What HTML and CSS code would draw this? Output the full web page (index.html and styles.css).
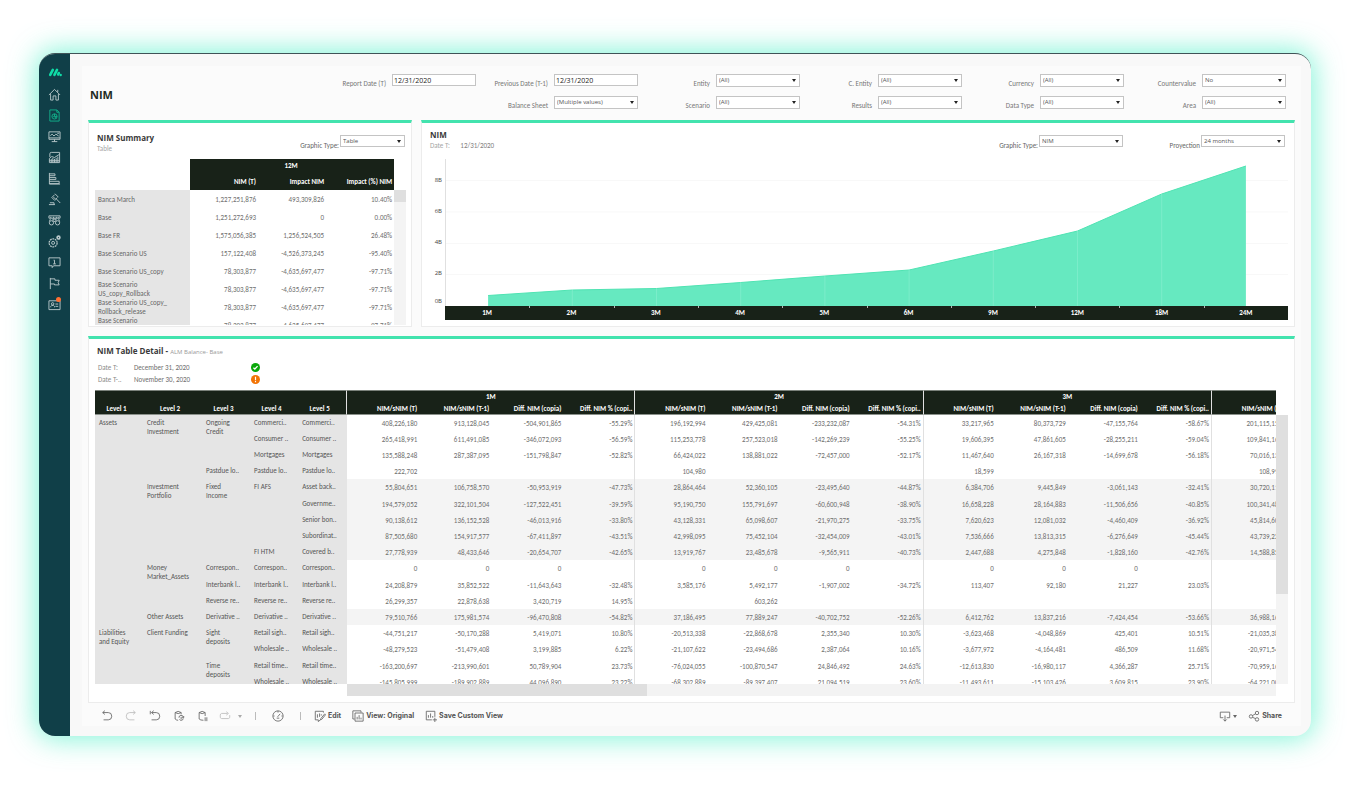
FILE: index.html
```html
<!DOCTYPE html>
<html lang="en">
<head>
<meta charset="utf-8">
<title>NIM</title>
<link rel="stylesheet" href="styles.css">
</head>
<body>
<div class="window">
  <aside class="sidebar">
    <svg class="logo" viewBox="0 0 14 10" width="14" height="10"><path d="M2.200 7.800 4.800 2.800M6.400 7.800 9 2.800M10.200 7.500 10.800 6" stroke="#0fdca6" stroke-width="2.600" stroke-linecap="round" fill="none"/><circle cx="12.700" cy="8" r="1.200" fill="#0fdca6"/></svg>
    <nav class="nav">
      <a href="#" aria-label="Home"><svg viewBox="0 0 14 14"><path d="M1 7.500 7 1.500 13 7.500M2.800 6.500V13H5.500V8.500H8.500V13H11.200V6.500M10.500 4.500V2"/></svg></a>
      <a href="#" class="active" aria-label="Reports"><svg viewBox="0 0 14 14"><path d="M2 1H9.500L12 3.500V13H2ZM9.500 1V3.500H12"/><circle cx="7" cy="8" r="2.800"/><path d="M7 5.200V8L9 9.800M7 8H9.800M5 7.500 6.500 9"/></svg></a>
      <a href="#" aria-label="Monitor"><svg viewBox="0 0 14 14"><path d="M1 2H13V10H1ZM1 8.500H13M7 10V12.500M4 12.500H10M2.500 6 4.500 4.500 6.500 6.500 8.500 4.500 11.500 6.500M10 3.500H12"/></svg></a>
      <a href="#" aria-label="Charts"><svg viewBox="0 0 14 14"><path d="M2 6.500V3Q2 1.500 3.500 1.500H12.500V12.500H1.500V8L4 6 7 7 12.500 3.500M3.500 12.500V8.500M5.200 12.500V7.500M7 12.500V8.500M8.800 12.500V7.500M10.600 12.500V6M1.500 10.500H12.500"/></svg></a>
      <a href="#" aria-label="Ranking"><svg viewBox="0 0 14 14"><path d="M1.500 1V13M1.500 2H7.500V4H1.500M1.500 6H8.500V8H1.500M1.500 10H12V12.500H1.500M1.500 13H13"/></svg></a>
      <a href="#" aria-label="Rules"><svg viewBox="0 0 14 14"><path d="M7.500 .8 11.200 4.500M3.800 4.500 7.500 8.200M7.200 1.800 4.800 4.200M10.200 4.800 7.800 7.200M5.500 4 8 6.500M8.800 6.200 13.200 10.800M1 12.500H7.500M2 10.500H6.500V12.500"/></svg></a>
      <a href="#" aria-label="Explore"><svg viewBox="0 0 14 14"><path d="M1 2H13V4.500H1ZM3 4.500V3M6 4.500V3M9 4.500V3M11 4.500V3M2.500 5.500 1.500 8M11.500 5.500 12.500 8M6 8H8M5 5.500H9M5.500 5.500V8M8.500 5.500V8"/><circle cx="3.700" cy="9.500" r="2.300"/><circle cx="10.300" cy="9.500" r="2.300"/></svg></a>
      <a href="#" aria-label="Settings"><svg viewBox="0 0 14 14"><circle cx="5.500" cy="8.500" r="4.300" stroke-dasharray="2 .7" stroke-width="1.300"/><circle cx="5.500" cy="8.500" r="1.600"/><circle cx="11.300" cy="2.800" r="1.500" stroke-width="1.800"/></svg></a>
      <a href="#" aria-label="Messages"><svg viewBox="0 0 14 14"><path d="M1 2H13V10.500H6L4.500 12.500V10.500H1ZM6 4.500H7V8.500M5.500 8.500H8.500"/></svg></a>
      <a href="#" aria-label="Flags"><svg viewBox="0 0 14 14"><path d="M2.500 1V13M2.500 2H7.500V3.500H12L11 6 12 8.500H7V7.500H2.500"/></svg></a>
      <a href="#" aria-label="Profile"><svg viewBox="0 0 14 14"><path d="M1 3H13V12.500H1ZM8 6.500H11M8 9H11M3 10V9L4 8H6L7 9V10"/><circle cx="5" cy="6.300" r="1.300"/></svg><span class="badge"></span></a>
    </nav>
  </aside>
  <main class="main">
    <div class="panel">
      <header class="top">
        <h1>NIM</h1>
        <form class="filters">
          <div class="field"><label for="f1">Report Date (T)</label><input id="f1" type="text" value="12/31/2020"></div>
          <div class="field"><label for="f2">Previous Date (T-1)</label><input id="f2" type="text" value="12/31/2020"></div>
          <div class="field"><label for="f3">Entity</label><span class="drop"><select id="f3"><option>(All)</option></select></span></div>
          <div class="field"><label for="f4">C. Entity</label><span class="drop"><select id="f4"><option>(All)</option></select></span></div>
          <div class="field"><label for="f5">Currency</label><span class="drop"><select id="f5"><option>(All)</option></select></span></div>
          <div class="field"><label for="f6">Countervalue</label><span class="drop"><select id="f6"><option>No</option></select></span></div>
          <div class="field second"><label for="f7">Balance Sheet</label><span class="drop"><select id="f7"><option>(Multiple values)</option></select></span></div>
          <div class="field"><label for="f8">Scenario</label><span class="drop"><select id="f8"><option>(All)</option></select></span></div>
          <div class="field"><label for="f9">Results</label><span class="drop"><select id="f9"><option>(All)</option></select></span></div>
          <div class="field"><label for="f10">Data Type</label><span class="drop"><select id="f10"><option>(All)</option></select></span></div>
          <div class="field"><label for="f11">Area</label><span class="drop"><select id="f11"><option>(All)</option></select></span></div>
        </form>
      </header>

      <div class="row">
        <section class="card summary">
          <div class="card-head">
            <div><h2>NIM Summary</h2><p class="sub">Table</p></div>
            <div class="pick"><label for="g1">Graphic Type:</label><span class="drop"><select id="g1"><option>Table</option></select></span></div>
          </div>
          <div class="summary-body">
            <table class="sum-table">
              <thead>
                <tr><td class="blank" rowspan="2"></td><th colspan="3" class="period">12M</th></tr>
                <tr><th>NIM (T)</th><th>Impact NIM</th><th>Impact (%) NIM</th></tr>
              </thead>
              <tbody>
                <tr><th>Banca March</th><td>1,227,251,876</td><td>493,309,826</td><td>10.40%</td></tr>
                <tr><th>Base</th><td>1,251,272,693</td><td>0</td><td>0.00%</td></tr>
                <tr><th>Base FR</th><td>1,575,056,385</td><td>1,256,524,505</td><td>26.48%</td></tr>
                <tr><th>Base Scenario US</th><td>157,122,408</td><td>-4,526,373,245</td><td>-95.40%</td></tr>
                <tr><th>Base Scenario US_copy</th><td>78,303,877</td><td>-4,635,697,477</td><td>-97.71%</td></tr>
                <tr><th>Base Scenario<br>US_copy_Rollback</th><td>78,303,877</td><td>-4,635,697,477</td><td>-97.71%</td></tr>
                <tr><th>Base Scenario US_copy_<br>Rollback_release</th><td>78,303,877</td><td>-4,635,697,477</td><td>-97.71%</td></tr>
                <tr><th class="upper">Base Scenario</th><td>78,303,877</td><td>-4,635,697,477</td><td>-97.71%</td></tr>
              </tbody>
            </table>
            <div class="vbar"><i></i></div>
          </div>
        </section>

        <section class="card chart-card">
          <div class="card-head">
            <div><h2>NIM</h2><p class="sub">Date T: <span class="date">12/31/2020</span></p></div>
            <div class="pick"><label for="g2">Graphic Type:</label><span class="drop"><select id="g2"><option>NIM</option></select></span></div>
            <div class="pick"><label for="g3">Proyection</label><span class="drop"><select id="g3"><option>24 months</option></select></span></div>
          </div>
          <div class="chart">
            <div class="y-axis"><span>8B</span><span>6B</span><span>4B</span><span>2B</span><span>0B</span></div>
            <div class="plot">
              <svg viewBox="0 0 1000 147" preserveAspectRatio="none">
                <path d="M0 21.500H1000M0 53H1000M0 84.500H1000M0 115.500H1000" stroke="#f7f7f7" fill="none"/>
                <path d="M50 147V136.500L150 131 250 129.500 350 123.500 450 117 550 111 650 92 750 72 850 35 950 7V147Z" fill="#66e9c0"/>
                <path d="M50 136.500 150 131 250 129.500 350 123.500 450 117 550 111 650 92 750 72 850 35 950 7" fill="none" stroke="#4fe3b2" vector-effect="non-scaling-stroke"/>
                <path d="M150 131V147M250 129.500V147M350 123.500V147M450 117V147M550 111V147M650 92V147M750 72V147M850 35V147" stroke="#7deccb" fill="none"/>
              </svg>
              <div class="x-axis"><span>1M</span><span>2M</span><span>3M</span><span>4M</span><span>5M</span><span>6M</span><span>9M</span><span>12M</span><span>18M</span><span>24M</span></div>
            </div>
          </div>
        </section>
      </div>

      <section class="card detail">
        <h2>NIM Table Detail - <small>ALM Balance- Base</small></h2>
        <dl class="dates">
          <dt>Date T:</dt><dd>December 31, 2020</dd><dd><svg viewBox="0 0 10 10" width="9" height="9"><circle cx="5" cy="5" r="5" fill="#0aa80a"/><path d="M2.700 5.200 4.300 6.700 7.300 3.500" fill="none" stroke="#fff" stroke-width="1.400"/></svg></dd>
          <dt>Date T-..</dt><dd>November 30, 2020</dd><dd><svg viewBox="0 0 10 10" width="9" height="9"><circle cx="5" cy="5" r="5" fill="#f27405"/><path d="M5 2V5.800M5 6.800V8" fill="none" stroke="#fff" stroke-width="1.300"/></svg></dd>
        </dl>
        <div class="detail-body">
          <div class="scroller">
            <table class="det-table">
              <colgroup><col class="lv"><col class="lv-wide"><col class="lv"><col class="lv"><col class="lv-last"><col span="13" class="num"></colgroup>
              <thead>
                <tr><td colspan="5" class="end"></td><th colspan="4" class="period end">1M</th><th colspan="4" class="period end">2M</th><th colspan="4" class="period end">3M</th><th></th></tr>
                <tr class="names"><th>Level 1<th>Level 2<th>Level 3<th>Level 4<th class="end">Level 5<th>NIM/sNIM (T)<th>NIM/sNIM (T-1)<th>Diff. NIM (copia)<th class="end">Diff. NIM % (copi..<th>NIM/sNIM (T)<th>NIM/sNIM (T-1)<th>Diff. NIM (copia)<th class="end">Diff. NIM % (copi..<th>NIM/sNIM (T)<th>NIM/sNIM (T-1)<th>Diff. NIM (copia)<th class="end">Diff. NIM % (copi..<th>NIM/sNIM (T)</tr>
              </thead>
              <tbody>
                <tr><th rowspan="13">Assets<th rowspan="4">Credit<br>Investment<th rowspan="3">Ongoing<br>Credit<th>Commerci..<th>Commerci..<td>408,226,180<td>913,128,045<td>-504,901,865<td class="end">-55.29%<td>196,192,994<td>429,425,081<td>-233,232,087<td class="end">-54.31%<td>33,217,965<td>80,373,729<td>-47,155,764<td class="end">-58.67%<td>201,115,152</tr>
                <tr><th>Consumer ..<th>Consumer ..<td>265,418,991<td>611,491,085<td>-346,072,093<td class="end">-56.59%<td>115,253,778<td>257,523,018<td>-142,269,239<td class="end">-55.25%<td>19,606,395<td>47,861,605<td>-28,255,211<td class="end">-59.04%<td>109,841,164</tr>
                <tr><th>Mortgages<th>Mortgages<td>135,588,248<td>287,387,095<td>-151,798,847<td class="end">-52.82%<td>66,424,022<td>138,881,022<td>-72,457,000<td class="end">-52.17%<td>11,467,640<td>26,167,318<td>-14,699,678<td class="end">-56.18%<td>70,016,132</tr>
                <tr><th>Pastdue lo..<th>Pastdue lo..<th>Pastdue lo..<td>222,702<td><td><td class="end"><td>104,980<td><td><td class="end"><td>18,599<td><td><td class="end"><td>108,992</tr>
                <tr class="alt"><th rowspan="5">Investment<br>Portfolio<th rowspan="5">Fixed<br>Income<th rowspan="4">FI AFS<th>Asset back..<td>55,804,651<td>106,758,570<td>-50,953,919<td class="end">-47.73%<td>28,864,464<td>52,360,105<td>-23,495,640<td class="end">-44.87%<td>6,384,706<td>9,445,849<td>-3,061,143<td class="end">-32.41%<td>30,720,112</tr>
                <tr class="alt"><th>Governme..<td>194,579,052<td>322,101,504<td>-127,522,451<td class="end">-39.59%<td>95,190,750<td>155,791,697<td>-60,600,948<td class="end">-38.90%<td>16,658,228<td>28,164,883<td>-11,506,656<td class="end">-40.85%<td>100,341,482</tr>
                <tr class="alt"><th>Senior bon..<td>90,138,612<td>136,152,528<td>-46,013,916<td class="end">-33.80%<td>43,128,331<td>65,098,607<td>-21,970,275<td class="end">-33.75%<td>7,620,623<td>12,081,032<td>-4,460,409<td class="end">-36.92%<td>45,814,602</tr>
                <tr class="alt"><th>Subordinat..<td>87,505,680<td>154,917,577<td>-67,411,897<td class="end">-43.51%<td>42,998,095<td>75,452,104<td>-32,454,009<td class="end">-43.01%<td>7,536,666<td>13,813,315<td>-6,276,649<td class="end">-45.44%<td>43,739,222</tr>
                <tr class="alt"><th>FI HTM<th>Covered b..<td>27,778,939<td>48,433,646<td>-20,654,707<td class="end">-42.65%<td>13,919,767<td>23,485,678<td>-9,565,911<td class="end">-40.73%<td>2,447,688<td>4,275,848<td>-1,828,160<td class="end">-42.76%<td>14,588,852</tr>
                <tr><th rowspan="3">Money<br>Market_Assets<th>Correspon..<th>Correspon..<th>Correspon..<td>0<td>0<td>0<td class="end"><td>0<td>0<td>0<td class="end"><td>0<td>0<td>0<td class="end"><td></tr>
                <tr><th>Interbank l..<th>Interbank l..<th>Interbank l..<td>24,208,879<td>35,852,522<td>-11,643,643<td class="end">-32.48%<td>3,585,176<td>5,492,177<td>-1,907,002<td class="end">-34.72%<td>113,407<td>92,180<td>21,227<td class="end">23.03%<td></tr>
                <tr><th>Reverse re..<th>Reverse re..<th>Reverse re..<td>26,299,357<td>22,878,638<td>3,420,719<td class="end">14.95%<td><td>603,262<td><td class="end"><td><td><td><td class="end"><td></tr>
                <tr class="alt"><th>Other Assets<th>Derivative ..<th>Derivative ..<th>Derivative ..<td>79,510,766<td>175,981,574<td>-96,470,808<td class="end">-54.82%<td>37,186,495<td>77,889,247<td>-40,702,752<td class="end">-52.26%<td>6,412,762<td>13,837,216<td>-7,424,454<td class="end">-53.66%<td>36,988,162</tr>
                <tr><th rowspan="4">Liabilities<br>and Equity<th rowspan="4">Client Funding<th rowspan="2">Sight<br>deposits<th>Retail sigh..<th>Retail sigh..<td>-44,751,217<td>-50,170,288<td>5,419,071<td class="end">10.80%<td>-20,513,338<td>-22,868,678<td>2,355,340<td class="end">10.30%<td>-3,623,468<td>-4,048,869<td>425,401<td class="end">10.51%<td>-21,035,382</tr>
                <tr><th>Wholesale ..<th>Wholesale ..<td>-48,279,523<td>-51,479,408<td>3,199,885<td class="end">6.22%<td>-21,107,622<td>-23,494,686<td>2,387,064<td class="end">10.16%<td>-3,677,972<td>-4,164,481<td>486,509<td class="end">11.68%<td>-20,971,542</tr>
                <tr><th rowspan="2">Time<br>deposits<th>Retail time..<th>Retail time..<td>-163,200,697<td>-213,990,601<td>50,789,904<td class="end">23.73%<td>-76,024,055<td>-100,870,547<td>24,846,492<td class="end">24.63%<td>-12,613,830<td>-16,980,117<td>4,366,287<td class="end">25.71%<td>-70,959,162</tr>
                <tr><th>Wholesale ..<th>Wholesale ..<td>-145,805,999<td>-189,902,889<td>44,096,890<td class="end">23.22%<td>-68,302,889<td>-89,397,407<td>21,094,519<td class="end">23.60%<td>-11,493,611<td>-15,103,426<td>3,609,815<td class="end">23.90%<td>-64,221,002</tr>
              </tbody>
            </table>
          </div>
          <div class="vbar"><i></i></div>
        </div>
        <div class="hbar"><i></i></div>
      </section>

      <footer class="toolbar">
        <button aria-label="Undo"><svg viewBox="0 0 14 14"><path d="M2 3H8.500A4 4.200 0 0 1 8.500 11.500H3M4.500 .8 2 3 4.500 5.200"/></svg></button>
        <button class="off" aria-label="Redo"><svg viewBox="0 0 14 14"><path d="M12 3H5.500A4 4.200 0 0 0 5.500 11.500H11M9.500 .8 12 3 9.500 5.200"/></svg></button>
        <button aria-label="Revert"><svg viewBox="0 0 14 14"><path d="M3 3H8.500A4 4.200 0 0 1 8.500 11.500H3M5.500 .8 3 3 5.500 5.200M1.500 1V5"/></svg></button>
        <button aria-label="Refresh"><svg viewBox="0 0 14 14"><path d="M2.500 3V10.500Q4 12 6 12M2.500 3Q6 .2 9.500 3 6 5.500 2.500 3M9.500 3V5M7 9A2.500 2.500 0 0 1 12 8.500M12 10A2.500 2.500 0 0 1 7.500 11M12.500 7V9H10.500M9.500 8V11"/></svg></button>
        <button aria-label="Pause"><svg viewBox="0 0 14 14"><path d="M2.500 3V10.500Q4 12 7.500 12M2.500 3Q6 .2 9.500 3 6 5.500 2.500 3M9.500 3V7M9.500 8.500V13M11.500 8.500V13"/></svg></button>
        <button class="off narrow" aria-label="Replay"><svg viewBox="0 0 14 14"><path d="M10 4H3A2 2 0 0 0 1.500 6V8.500A1.800 1.800 0 0 0 3 10H11A1.800 1.800 0 0 0 12.500 8.500V6M8.500 2 11 4 8.500 6"/></svg></button>
        <button class="off caret" aria-label="Replay options"></button>
        <span class="sep"></span>
        <button aria-label="Metrics"><svg viewBox="0 0 14 14"><circle cx="7" cy="7" r="6"/><path d="M6.500 8 9.500 4.500M7 1V3M3 7H1.500M12.500 7H11M5.500 9.500H8.500"/></svg></button>
        <span class="sep"></span>
        <button class="text first"><svg viewBox="0 0 14 14"><path d="M11 3V1.500H1.500V11.500H5L5 13.500 7.500 11.500M4 9V5M6.500 8V4M8.500 6.500V5M8 10 12.500 4.500 13.500 5.500 9 11 7.500 11.500Z"/></svg>Edit</button>
        <button class="text"><svg viewBox="0 0 14 14"><path d="M10.500 3V1H1V10.500H3M3.500 3.500H13V13H3.500ZM6 11V8M8.300 11V6M10.500 11V9"/></svg>View: Original</button>
        <button class="text"><svg viewBox="0 0 14 14"><path d="M11.500 8V1.500H1.500V11.500H8M4 9V6M6.500 9V4M9 9V7M11.500 9V14M9 11.500H14"/></svg>Save Custom View</button>
        <span class="space"></span>
        <button class="text present" aria-label="Present"><svg viewBox="0 0 14 14"><path d="M5 9H1.500V2.500H12.500V9H9M7 6.500V13M5 11 7 13 9 11"/></svg><i class="tri"></i></button>
        <button class="text"><svg viewBox="0 0 14 14"><circle cx="3.500" cy="7.500" r="2"/><circle cx="10.500" cy="3.500" r="2"/><circle cx="10.500" cy="11" r="2"/><path d="M5.200 6.500 8.700 4.500M5.200 8.500 8.700 10"/></svg>Share</button>
      </footer>
    </div>
  </main>
</div>
</body>
</html>
```
FILE: styles.css
```css
* { box-sizing: border-box; margin: 0; padding: 0; }
body {
  padding: 53px 39px;
  background: #fff;
  font: 7px/9px Carlito, Calibri, Lato, sans-serif;
  color: #6e6e6e;
}
.window {
  display: flex;
  overflow: hidden;
  border-top: 1px solid #3f5357;
  border-radius: 16px;
  background: #f8f8f8;
  box-shadow: 0 0 28px 3px rgba(80, 240, 200, .7);
}
.sidebar { flex: 0 0 31px; padding-top: 13px; background: #103f48; text-align: center; }
.logo { display: block; margin: 0 auto 7px; }
.nav a { position: relative; display: flex; align-items: center; justify-content: center; height: 21px; }
.nav svg { width: 13px; height: 13px; fill: none; stroke: #b9c8ca; stroke-width: 1; }
.nav .active svg { stroke: #12b08a; }
.badge { position: absolute; top: 3px; right: 9px; width: 5px; height: 5px; border-radius: 50%; background: #ff7033; }

.main { flex: 1; min-width: 0; padding: 12px 10px 10px 12px; }
.panel { padding: 0 6px; background: #fbfbfb; }

.top { display: flex; justify-content: space-between; padding-right: 9px; height: 54px; }
h1 { padding: 22px 2px 0; font: 700 11px/14px "Open Sans", sans-serif; color: #222b22; }
.filters { display: grid; grid-template-columns: repeat(6, 162px); row-gap: 10px; align-content: start; padding-top: 8px; }
.field { display: flex; justify-content: flex-end; gap: 6px; height: 12px; }
.field label { padding-top: 5px; white-space: nowrap; color: #777; }
.second { grid-column: 2; }
.drop { position: relative; display: block; width: 84px; height: 13px; }
.drop::after {
  content: ""; position: absolute; right: 4px; top: 5px;
  border: 2px solid transparent; border-top: 3px solid #222; border-bottom: 0;
}
select, input {
  appearance: none; display: block; width: 84px; height: 13px; padding: 0 2px;
  border: 1px solid #c4c4c4; border-radius: 0; background: #fff;
  font: 6px/9px "Open Sans", sans-serif; color: #555;
}
input { height: 12px; padding: 0 1px; font-size: 7px; color: #222; }
.drop select { width: 100%; }

.row { display: grid; grid-template-columns: 324fr 874fr; gap: 9px; margin-bottom: 9px; }
.card { min-width: 0; background: #fff; border: 1px solid #ececec; border-top: 3px solid #43e3ae; }
.summary { padding: 0 5px 1px 6px; }
.chart-card { padding: 0 6px 6px 8px; }
h2 { font: 700 8px/11px "Open Sans", sans-serif; color: #3a3a3a; }
.card-head { display: flex; height: 36px; }
.card-head > :first-child { flex: 1; }
.summary .card-head { padding: 9px 1px 0 2px; }
.chart-card .card-head { padding: 6px 3px 0 0; }
.sub { line-height: 12px; color: #a5a5a5; }
.sub .date { margin-left: 9px; color: #808080; }
.pick { display: flex; gap: 1px; padding-top: 3px; }
.chart-card .pick { justify-content: flex-end; width: 162px; padding-top: 6px; }
.pick label { padding-top: 6px; color: #666; }
.pick .drop, .pick select { height: 12px; }
.summary .drop { width: 65px; }

.summary-body { display: flex; height: 166px; overflow: hidden; }
.sum-table { flex: 1; width: 100%; table-layout: fixed; border-collapse: collapse; height: 175px; }
.sum-table .blank { width: 95px; background: #fff; }
.sum-table thead th { height: 18px; background: #182218; color: #fff; font-weight: 600; text-align: right; padding-right: 2px; }
.sum-table thead .period { height: 13px; text-align: center; }
.sum-table tbody tr { height: 18px; }
.sum-table tbody th { padding-left: 3px; background: #e5e5e5; text-align: left; font-weight: 400; color: #666; white-space: nowrap; }
.sum-table tbody .upper { vertical-align: top; }
.sum-table tbody td { padding-right: 2px; text-align: right; }
.vbar { flex: 0 0 12px; background: #f4f4f4; }
.vbar i { display: block; background: #dfdfdf; }
.summary .vbar { margin-top: 31px; }
.summary .vbar i { height: 12px; }

.chart { display: flex; }
.y-axis { display: flex; flex-direction: column; width: 15px; padding: 6px 3px 0 0; text-align: right; font: 6px/31px "Open Sans", sans-serif; color: #444; }
.y-axis span { height: 31px; }
.y-axis span:last-child { height: 17px; line-height: 24px; }
.plot { flex: 1; min-width: 0; }
.plot svg { display: block; width: 100%; height: 147px; border-left: 1px solid #e0e0e0; }
.x-axis { display: grid; grid-template-columns: repeat(10, 1fr); background: #182218; color: #fff; text-align: center; line-height: 14px; font-weight: 600; }
.x-axis span + span { background: linear-gradient(#b5b5b5, #b5b5b5) 0 0 / 1px 2px no-repeat; }

.detail { padding: 6px; }
.detail h2 { padding-left: 2px; }
h2 small { font: 6px/11px "Open Sans", sans-serif; color: #999; }
.dates { display: grid; grid-template-columns: 36px 117px 12px; grid-auto-rows: 12px; padding: 4px 3px 0; line-height: 12px; }
.dates dt { color: #8a8a8a; }
.dates dd svg { display: block; margin-top: 1px; }
.detail-body { display: flex; height: 294px; margin-top: 4px; }
.scroller { flex: 1; min-width: 0; overflow: hidden; background: #fff; }
.det-table { width: 1189px; table-layout: fixed; border-collapse: separate; border-spacing: 0; }
.lv { width: 48px; }
.lv-last { width: 49px; }
.lv-wide { width: 59px; }
.num { width: 72px; }
.det-table thead th, .det-table thead td { height: 12px; background: #182218; color: #fff; font-weight: 600; text-align: right; padding-right: 2px; white-space: nowrap; }
.det-table thead tr:first-child > * { border-top: 1px solid #7b827b; }
.det-table thead .names th { height: 13px; border-bottom: 1px solid #8b918b; }
.det-table thead .period { text-align: center; padding: 0; }
.det-table .names th:nth-child(-n+5) { text-align: center; padding-right: 5px; }
.det-table .end { border-right: 1px solid #e0e0e0; }
.det-table tbody tr { height: 16px; }
.det-table tbody tr:nth-child(5n) { height: 17px; }
.det-table tbody th { padding: 3px 0 0 4px; background: #e5e5e5; font-weight: 400; color: #555; text-align: left; vertical-align: top; white-space: nowrap; }
.det-table tbody td { padding-right: 2px; text-align: right; }
.det-table .alt td { background: #f4f4f4; }
.detail .vbar { margin-top: 25px; }
.detail .vbar i { height: 179px; }
.hbar { height: 12px; margin: 0 12px 0 252px; background: #f3f3f3; }
.hbar i { display: block; width: 300px; height: 12px; background: #dfdfdf; }

.toolbar { display: flex; align-items: center; height: 23px; padding: 3px 13px 0 7px; }
.toolbar button { display: flex; align-items: center; justify-content: center; width: 24px; border: 0; background: none; color: #555; font: 700 7px/12px Inter, sans-serif; white-space: nowrap; }
.toolbar svg { width: 12px; height: 12px; fill: none; stroke: #666; stroke-width: 1; }
.toolbar .off svg { stroke: #bdbdbd; }
.toolbar .narrow { width: 20px; }
.toolbar .caret { width: 10px; }
.toolbar .caret::before, .tri { border: 2px solid transparent; border-top: 3px solid #666; border-bottom: 0; }
.toolbar .caret::before { content: ""; border-top-color: #aaa; }
.sep { width: 1px; height: 8px; margin: 0 10px; background: #bbb; }
.toolbar .text { width: auto; gap: 2px; margin-right: 11px; }
.toolbar .first { margin-left: 3px; }
.toolbar .text:last-child { margin-right: 0; }
.space { flex: 1; }
```
